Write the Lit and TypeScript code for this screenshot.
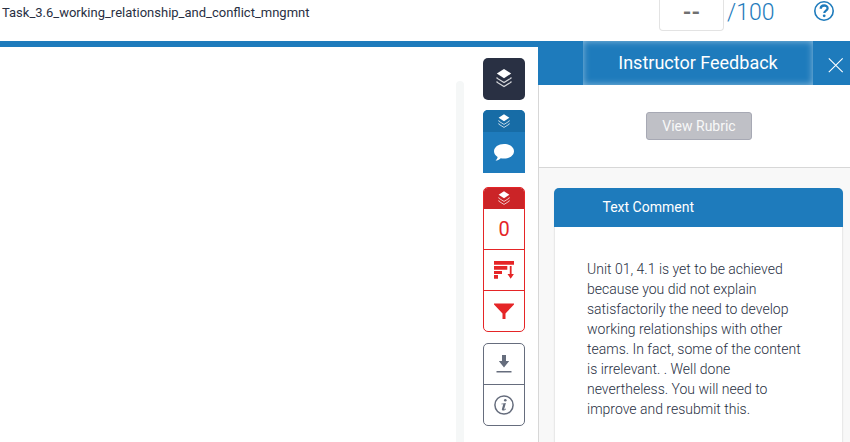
import { LitElement, html, css, svg } from "lit";
import { customElement } from "lit/decorators.js";

const layers = (cls: string) => html`
  <svg class=${cls} viewBox="0 0 16 20" fill="none">
    <path d="M8 1 15.200 5.600 8 10.200.8 5.600Z" fill="#fff" />
    <path d="M1 9.200v1L8 14.600l7-4.400v-1M1 13.200v1L8 18.600l7-4.400v-1" stroke="#fff" stroke-width="1.200" opacity=".8" />
  </svg>`;

const arrow = svg`<path d="M15.800 6v8h-2.300l3.200 4.700 3.200-4.700h-2.300V6Z" />`;

const comment = [
  "Unit 01, 4.1 is yet to be achieved",
  "because you did not explain",
  "satisfactorily the need to develop",
  "working relationships with other",
  "teams. In fact, some of the content",
  "is irrelevant. . Well done",
  "nevertheless. You will need to",
  "improve and resubmit this.",
];

@customElement("app-root")
export class AppRoot extends LitElement {
  static styles = css`
    :host {
      display: flex;
      flex-direction: column;
      height: 442px;
      overflow: hidden;
      background: #fff;
      font-family: Roboto, "Liberation Sans", sans-serif;
      color: #293043;
    }
    * { box-sizing: border-box; }
    svg { display: block; }
    .top {
      flex: none;
      height: 41px;
      display: flex;
      align-items: flex-start;
      padding-left: 2px;
    }
    .name { flex: 1; font-size: 13px; line-height: 26px; white-space: nowrap; }
    .score {
      width: 65px;
      height: 31px;
      border: 1px solid #e3e3e3;
      border-top: 0;
      border-radius: 0 0 4px 4px;
      text-align: center;
      font-size: 22px;
      font-weight: 700;
      line-height: 25px;
      color: #707070;
    }
    .max {
      width: 89px;
      padding-left: 3px;
      font-size: 23px;
      font-weight: 300;
      line-height: 25px;
      color: #1e7bbc;
    }
    .help { width: 22px; height: 22px; margin-right: 15px; }
    .main { flex: 1; display: flex; min-height: 0; }
    .viewer {
      width: 538px;
      border-top: 6px solid #1e7bbc;
      display: flex;
      align-items: flex-start;
      padding-left: 456px;
    }
    .track {
      width: 8px;
      height: 380px;
      margin-top: 34px;
      border-radius: 4px 4px 0 0;
      background: #f5f7f7;
    }
    .tools { width: 42px; margin: 11px 0 0 19px; }
    .dark {
      height: 42px;
      border-radius: 5px;
      background: #293043;
      display: grid;
      place-items: center;
    }
    .big { width: 16px; height: 20px; margin-top: -3px; }
    .small { width: 12px; height: 16px; }
    .blue { margin-top: 10px; height: 63px; border-radius: 5px 5px 0 0; overflow: hidden; background: #1e7bbc; }
    .tab { height: 22px; display: grid; place-items: center; background: #176ca6; }
    .bubble { height: 39px; display: grid; place-items: center; }
    .group { border: 1px solid; border-radius: 5px; overflow: hidden; }
    .red { margin-top: 14px; color: #e52527; }
    .red .tab { background: #cb2427; margin: -1px -1px 0; }
    .cell { height: 41px; display: grid; place-items: center; border-top: 1px solid; }
    .red .tab + .cell, .gray .cell:first-child { border-top: 0; height: 40px; }
    .gray { margin-top: 11px; color: #666d7d; }
    .count { font-size: 20px; line-height: 40px; }
    .side { flex: 1; display: flex; flex-direction: column; min-width: 0; }
    .head { flex: none; height: 44px; background: #1e7bbc; display: flex; padding-left: 45px; }
    .title {
      width: 230px;
      box-shadow: inset 0 0 7px rgba(255, 255, 255, 0.5);
      text-align: center;
      color: #fff;
      font-size: 18px;
      line-height: 43px;
    }
    .close { width: 16px; height: 16px; margin: 16px 0 0 15px; }
    .body { flex: 1; border-left: 1px solid #d7d7d7; background: #f8f8f8; min-height: 0; }
    .rubric { height: 83px; background: #fff; border-bottom: 1px solid #d7d7d7; padding: 27px 0 0 107px; }
    .button {
      width: 106px;
      height: 28px;
      border: 1px solid #a7a9b4;
      border-radius: 3px;
      background: #bfc0c6;
      color: #f8f8f8;
      font-size: 14px;
      line-height: 26px;
      text-align: center;
    }
    .card {
      width: 289px;
      height: 280px;
      margin: 20px 0 0 15px;
      border: 1px solid #e9e9e9;
      border-radius: 5px;
      background: #fff;
      box-shadow: 0 1px 2px rgba(0, 0, 0, 0.06);
    }
    .cardhead {
      height: 39px;
      margin: -1px -1px 0;
      padding-left: 48.5px;
      border-radius: 5px 5px 0 0;
      background: #1e7bbc;
      color: #fff;
      font-size: 14px;
      line-height: 38px;
    }
    .text {
      padding: 32px 0 0 32px;
      font-size: 14px;
      font-weight: 300;
      line-height: 20px;
      color: #293043;
      white-space: nowrap;
    }
  `;

  render() {
    return html`
      <header class="top">
        <div class="name">Task_3.6_working_relationship_and_conflict_mngmnt</div>
        <div class="score">--</div>
        <div class="max">/100</div>
        <svg class="help" viewBox="0 0 22 22" fill="none" stroke="#1e7bbc">
          <circle cx="11" cy="11" r="9.200" stroke-width="1.600" />
          <path d="M7.700 8.700c0-4.200 6.900-4.200 6.900-.5 0 2.500-3.300 2.300-3.300 4.900" stroke-width="2.300" />
          <circle cx="11.200" cy="15.800" r="1.400" fill="#1e7bbc" stroke="none" />
        </svg>
      </header>
      <div class="main">
        <section class="viewer">
          <div class="track"></div>
          <nav class="tools">
            <div class="dark">${layers("big")}</div>
            <div class="blue">
              <div class="tab">${layers("small")}</div>
              <div class="bubble">
                <svg width="22" height="20" viewBox="0 0 22 20" fill="#fff">
                  <path d="M11 2c5.600 0 10 3.200 10 7.300s-4.400 7.300-10 7.300c-1.200 0-2.300-.1-3.300-.4C6.200 17.800 4.400 18.500 2.500 18.500c1.300-1 2-2.200 2.100-3.500C2.400 13.600 1 11.600 1 9.300 1 5.200 5.400 2 11 2Z" />
                </svg>
              </div>
            </div>
            <div class="group red">
              <div class="tab">${layers("small")}</div>
              <div class="cell count">0</div>
              <div class="cell">
                <svg width="20" height="20" viewBox="0 0 20 20" fill="currentColor">
                  <path d="M0 1h20v3.700H0ZM0 6h13.300v3.700H0ZM0 11h8v3H0ZM0 15h4v3.700H0Z" />
                  ${arrow}
                </svg>
              </div>
              <div class="cell">
                <svg width="20" height="18" viewBox="0 0 20 18" fill="currentColor">
                  <path d="M0 1.500h20v1L11.500 11.500V17h-3v-5.500L0 2.500Z" />
                </svg>
              </div>
            </div>
            <div class="group gray">
              <div class="cell">
                <svg width="16" height="20" viewBox="0 0 16 20" fill="currentColor">
                  <path d="M6 1h4v6h3.200L8 13.500 2.800 7H6ZM.5 17h15v1.500H.5Z" />
                </svg>
              </div>
              <div class="cell">
                <svg width="20" height="20" viewBox="0 0 20 20" fill="currentColor">
                  <circle cx="10" cy="10" r="9.100" fill="none" stroke="currentColor" stroke-width="1.500" />
                  <circle cx="11.300" cy="5.300" r="1.300" />
                  <path d="M7.300 8.800 11.900 8l-1.700 6c-.1.700.6.400 1.500-.5l.4.400c-1.600 2-4.700 2.200-4.200.100L9.300 9.300l-2-.1Z" />
                </svg>
              </div>
            </div>
          </nav>
        </section>
        <aside class="side">
          <div class="head">
            <div class="title">Instructor Feedback</div>
            <svg class="close" viewBox="0 0 16 16" stroke="#fff" stroke-width="1.100">
              <path d="M.8 1.300 14.700 15.200M14.700 1.300.8 15.200" />
            </svg>
          </div>
          <div class="body">
            <div class="rubric"><div class="button">View Rubric</div></div>
            <article class="card">
              <div class="cardhead">Text Comment</div>
              <div class="text">${comment.map((line) => html`<div>${line}</div>`)}</div>
            </article>
          </div>
        </aside>
      </div>
    `;
  }
}
